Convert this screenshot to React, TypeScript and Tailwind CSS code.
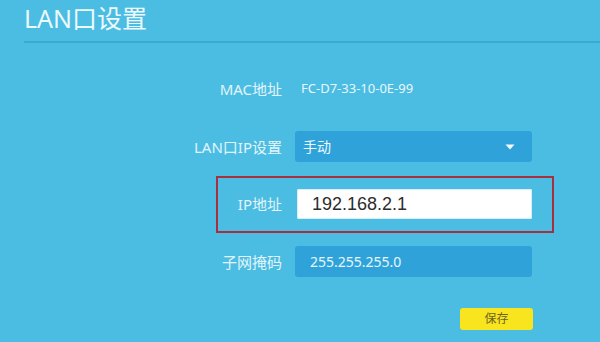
import React from "react";

const cjk = { fontFamily: '"Noto Sans", "Noto Sans CJK SC", sans-serif' };

function Label({ children }: { children: React.ReactNode }) {
  return (
    <div className="w-[110px] shrink-0 text-right text-[15px] leading-[20px] text-[#e2f4fb]">
      {children}
    </div>
  );
}

export default function App() {
  return (
    <div
      className="w-[600px] h-[342px] overflow-hidden bg-[#4bbde2] flex flex-col"
      style={cjk}
    >
      <div className="pl-[24px] pt-[2px]">
        <div className="text-[25px] leading-[32px] text-[#ecf9fd]">LAN口设置</div>
        <div className="mt-[7px] h-[2px] bg-[#3aa9d6]" />
      </div>

      <div className="flex flex-col pl-[172px]">
        <div className="mt-[36px] flex items-center gap-[13px] h-[20px]">
          <Label>MAC地址</Label>
          <div className="text-[13px] text-[#e8f7fc] pl-[6px]">FC-D7-33-10-0E-99</div>
        </div>

        <div className="mt-[32px] flex items-center gap-[13px]">
          <Label>LAN口IP设置</Label>
          <div className="w-[237px] h-[31px] rounded-[3px] bg-[#2fa3d9] flex items-center justify-between px-[8px]">
            <span className="text-[14px] text-[#eef9fd]">手动</span>
            <svg width="10" height="6" viewBox="0 0 10 6" className="mr-[9px]">
              <path d="M0.5 0.5 L9.5 0.5 L5 5.5 Z" fill="#f3fbfe" />
            </svg>
          </div>
        </div>

        <div className="mt-[27px] relative flex items-center gap-[13px]">
          <div className="absolute left-[44px] top-[-13px] w-[338px] h-[57px] border-2 border-[#a7303e] pointer-events-none" />
          <Label>IP地址</Label>
          <div className="w-[235px] h-[30px] ml-[2px] bg-white rounded-[2px] flex items-center pl-[15px] shadow-[inset_0_0_0_1px_#d8eef6]">
            <span
              className="text-[18px] text-[#2c2c2c]"
              style={{ fontFamily: '"Liberation Sans", Arial, sans-serif' }}
            >
              192.168.2.1
            </span>
          </div>
        </div>

        <div className="mt-[27px] flex items-center gap-[13px]">
          <Label>子网掩码</Label>
          <div className="w-[237px] h-[31px] rounded-[3px] bg-[#2fa3d9] flex items-center pl-[15px]">
            <span className="text-[14px] text-[#e6f6fc]">255.255.255.0</span>
          </div>
        </div>

        <div className="mt-[31px] flex">
          <div className="ml-[288px] w-[73px] h-[22px] rounded-[3px] bg-[#f9e51e] flex items-center justify-center text-[12px] text-[#6b6422]">
            保存
          </div>
        </div>
      </div>
    </div>
  );
}
